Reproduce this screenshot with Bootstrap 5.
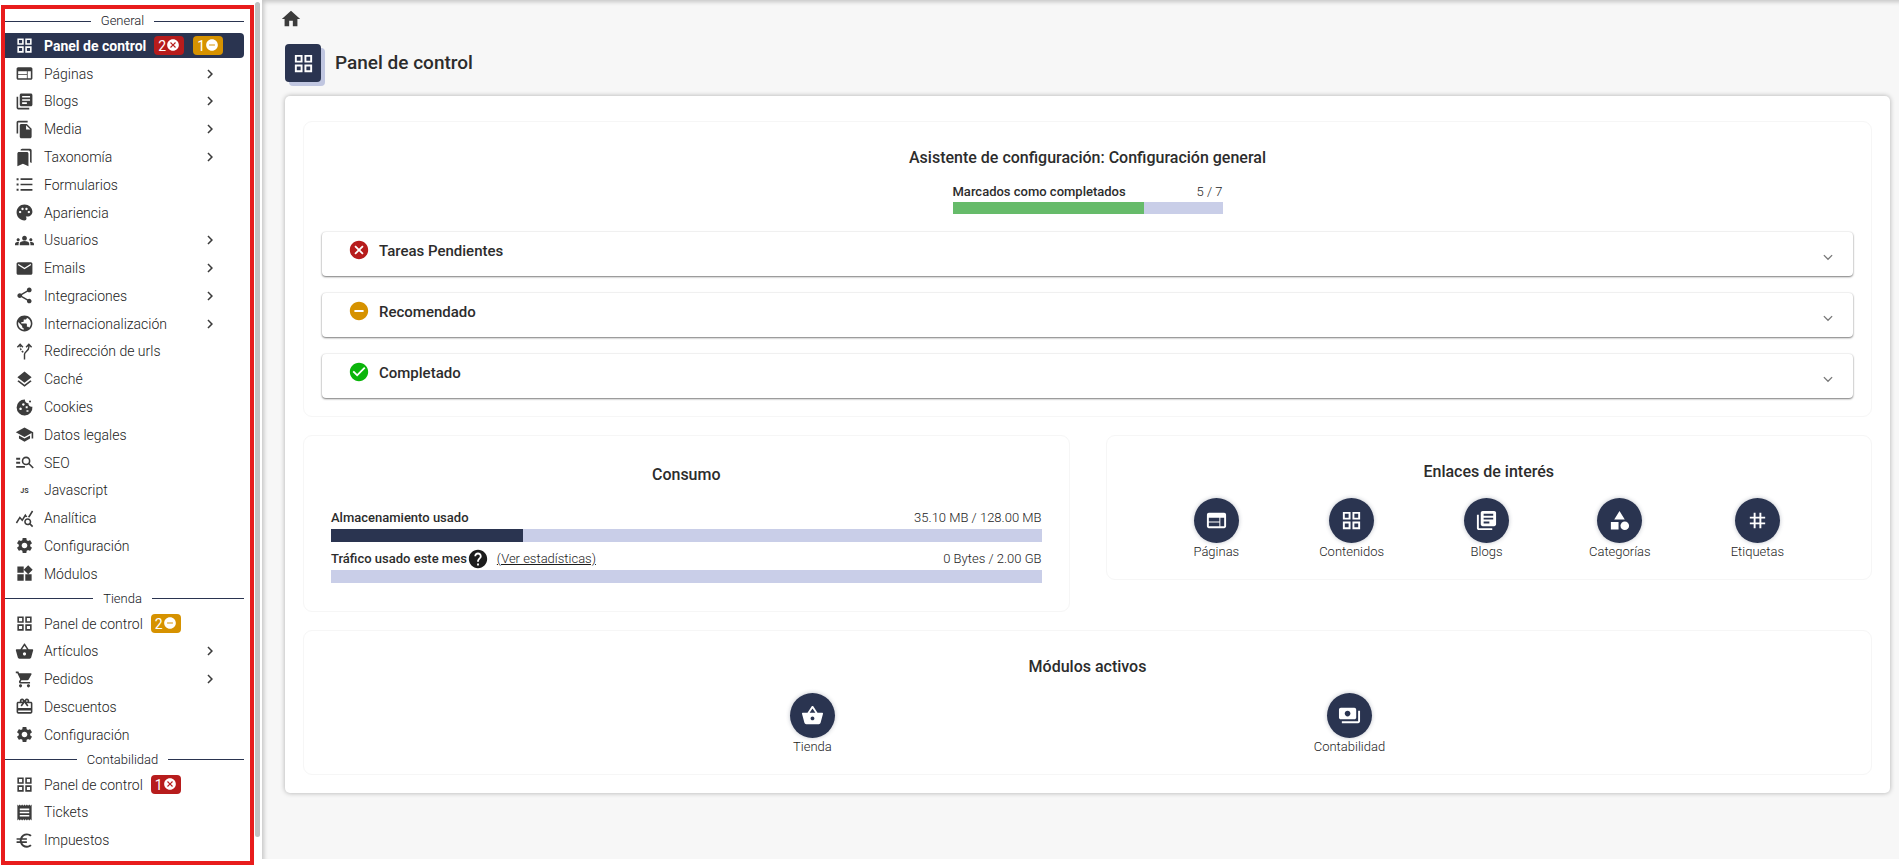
<!DOCTYPE html>
<html lang="es">
<head>
<meta charset="utf-8">
<meta name="viewport" content="width=device-width, initial-scale=1">
<title>Panel de control</title>
<link href="https://cdn.jsdelivr.net/npm/bootstrap@5.3.0/dist/css/bootstrap.min.css" rel="stylesheet">
<style>
  :root { --navy: #2a3450; --lilac: #c9cee8; --ink: #2c2c2c; --icon: #3c3c3c; --danger: #b71c1c; --amber: #d69200; --ok: #0bb50b; }
  body { font-family: Roboto, "Liberation Sans", sans-serif; font-size: 13px; line-height: 16px; font-weight: 300; color: #1c1c1c; background: #fff; }
  .ico { width: 19px; height: 19px; fill: currentColor; flex: none; display: block; }
  .ico-lg { width: 23px; height: 23px; }
  .ico-md { width: 22px; height: 22px; }

  /* Sidebar */
  .side { width: 262px; padding: 5px 0 0 1px; }
  .side-frame { border: 4px solid #e81c1c; width: 253px; padding: 1px 0 7px; }
  .side-track { width: 5px; margin: -3px 0 28px 1px; background: #c1c1c1; border-radius: 3px; }
  .side-title { height: 22px; gap: 10px; padding-right: 6px; color: #14161c; }
  .side-title::before { content: ""; flex: 1 1 0; border-top: 1px solid var(--navy); }
  .side-title::after { content: ""; flex: 1 1 4px; border-top: 1px solid var(--navy); }
  .side-list { flex: 1 1 auto; }
  .side-item { flex: 1 1 27px; }
  .side-link { height: 25px; padding-left: 10px; margin-right: 6px; gap: 10px; font-size: 14px; color: #222; text-decoration: none; border-radius: 0 4px 4px 0; }
  .side-link .ico { color: var(--icon); }
  .side-link.active { background: var(--navy); color: #fff; font-weight: 700; }
  .side-link.active .ico { color: #fff; }
  .side-link .arrow { width: 18px; height: 18px; margin-left: auto; margin-right: 25px; }
  .side-link .pill { height: 19px; padding: 0 4px; border-radius: 4px; color: #fff; font-size: 14px; font-weight: 400; margin-right: -1px; }
  .side-link .pill .ico { width: 14px; height: 14px; color: #fff; margin-top: -2px; }
  .pill-danger { background: var(--danger); }
  .pill-amber { background: var(--amber); }
  .side-label { margin-right: -2px; }

  /* Main area */
  .main { background: #f7f7f7; margin-bottom: 6px; padding: 8px 9px 0 23px; box-shadow: inset 3px 3px 4px -1px rgba(0,0,0,.2); }
  .crumb { margin-left: -5px; color: var(--icon); }
  .tile { width: 36px; height: 38px; border-radius: 4px; background: var(--navy); color: #fff; box-shadow: 4px 4px 0 #c0c6e0; }
  .head { margin: 10px 0 14px; gap: 14px; }
  .head h1 { font-size: 19px; line-height: 24px; font-weight: 500; color: var(--ink); }
  .sheet { background: #fff; border-radius: 5px; padding: 25px 18px 18px; box-shadow: 0 0 5px rgba(0,0,0,.3); }
  .box { border: 1px solid #f6f6f6; border-radius: 9px; }
  .box h2 { font-size: 16px; line-height: 20px; font-weight: 500; text-align: center; margin: 0; color: var(--ink); }
  .box-wizard { padding: 26px 18px 18px; }
  .wizard-bar { width: 270px; }
  .meter { height: 12px; background: var(--lilac); border-radius: 0; margin-top: 2px; }
  .meter .progress-bar { background: var(--navy); }
  .meter .done { background: #66bb6a; }
  .name { font-weight: 500; color: var(--ink); }
  .folds { gap: 17px; margin-top: 18px; }
  .fold { height: 44px; padding: 0 14px 0 26px; font-size: 15px; font-weight: 500; color: var(--ink); background: #fff; border: 0; border-radius: 4px; box-shadow: 0 1px 2px rgba(0,0,0,.5), 0 0 2px rgba(0,0,0,.12); gap: 9px; }
  .fold .ico-md { margin-bottom: 8px; }
  .fold .fold-label { margin-bottom: 6px; }
  .fold .chev { margin: 5px 0 0 auto; color: #777; }
  .box-use { padding: 29px 27px 28px; }
  .box-use .meter { height: 13px; }
  .line-row { height: 18px; }
  .box-links { padding: 26px 7px 19px; }
  .disc { width: 45px; height: 45px; border-radius: 50%; background: var(--navy); color: #fff; box-shadow: 0 0 4px rgba(42,52,80,.3); }
  .quick { color: inherit; text-decoration: none; gap: 1px; }
</style>
</head>
<body>
<svg width="0" height="0" class="position-absolute" aria-hidden="true">
  <symbol id="grid" viewBox="0 0 24 24"><path d="M3 3v8h8V3H3zm6 6H5V5h4v4zm-6 4v8h8v-8H3zm6 6H5v-4h4v4zm4-16v8h8V3h-8zm6 6h-4V5h4v4zm-6 4v8h8v-8h-8zm6 6h-4v-4h4v4z"/></symbol>
  <symbol id="web" viewBox="0 0 24 24"><path d="M20 4H4c-1.1 0-1.99.9-1.99 2L2 18c0 1.1.9 2 2 2h16c1.1 0 2-.9 2-2V6c0-1.1-.9-2-2-2zm-5 14H4v-4h11v4zm0-5H4V9h11v4zm5 5h-4V9h4v9z"/></symbol>
  <symbol id="books" viewBox="0 0 24 24"><path d="M4 6H2v14c0 1.1.9 2 2 2h14v-2H4V6zm16-4H8c-1.1 0-2 .9-2 2v12c0 1.1.9 2 2 2h12c1.1 0 2-.9 2-2V4c0-1.1-.9-2-2-2zm-1 9H9V9h10v2zm-4 4H9v-2h6v2zm4-8H9V5h10v2z"/></symbol>
  <symbol id="copy" viewBox="0 0 24 24"><path d="M16 1H4c-1.1 0-2 .9-2 2v14h2V3h12V1zm-1 4l6 6v10c0 1.1-.9 2-2 2H7.99C6.89 23 6 22.1 6 21l.01-14c0-1.1.89-2 1.99-2h7zm-1 7h5.5L14 6.5V12z"/></symbol>
  <symbol id="marks" viewBox="0 0 24 24"><path d="M19 18l2 1V3c0-1.1-.9-2-2-2H8.99C7.89 1 7 1.9 7 3h10c1.1 0 2 .9 2 2v13zM15 5H5c-1.1 0-2 .9-2 2v16l7-3 7 3V7c0-1.1-.9-2-2-2z"/></symbol>
  <symbol id="list" viewBox="0 0 24 24"><path d="M2 4h2.500v2.500H2zM2 10.750h2.500v2.500H2zM2 17.500h2.500V20H2zM7 4.250h15v2H7zM7 11h15v2H7zM7 17.750h15v2H7z"/></symbol>
  <symbol id="palette" viewBox="0 0 24 24"><path d="M12 2C6.49 2 2 6.49 2 12s4.490 10 10 10c1.380 0 2.500-1.120 2.500-2.500 0-.61-.23-1.200-.64-1.670-.08-.1-.13-.21-.13-.33 0-.28.22-.5.5-.5H16c3.310 0 6-2.690 6-6 0-4.960-4.490-9-10-9zm5.500 11c-.83 0-1.500-.67-1.500-1.500s.67-1.500 1.500-1.500 1.500.67 1.500 1.500-.67 1.500-1.500 1.500zm-3-4c-.83 0-1.500-.67-1.500-1.500S13.670 6 14.500 6s1.500.67 1.500 1.500S15.330 9 14.500 9zM5 11.500c0-.83.67-1.500 1.500-1.500s1.500.67 1.500 1.500S7.330 13 6.500 13 5 12.330 5 11.500zm6-4c0 .83-.67 1.500-1.500 1.500S8 8.330 8 7.500 8.670 6 9.500 6s1.500.67 1.500 1.500z"/></symbol>
  <symbol id="groups" viewBox="0 0 24 24"><path d="M12 12.750c1.630 0 3.070.39 4.240.9 1.080.48 1.760 1.560 1.760 2.730V18H6v-1.610c0-1.180.68-2.260 1.760-2.730 1.170-.52 2.610-.91 4.240-.91zM4 13c1.100 0 2-.9 2-2s-.9-2-2-2-2 .9-2 2 .9 2 2 2zm1.130 1.100c-.37-.06-.74-.1-1.130-.1-.99 0-1.930.21-2.780.58C.48 14.900 0 15.620 0 16.430V18h4.500v-1.610c0-.83.23-1.610.63-2.290zM20 13c1.100 0 2-.9 2-2s-.9-2-2-2-2 .9-2 2 .9 2 2 2zm4 3.430c0-.81-.48-1.530-1.220-1.850-.85-.37-1.790-.58-2.780-.58-.39 0-.76.04-1.130.1.4.68.63 1.460.63 2.290V18H24v-1.570zM12 6c1.660 0 3 1.340 3 3s-1.340 3-3 3-3-1.340-3-3 1.340-3 3-3z"/></symbol>
  <symbol id="mail" viewBox="0 0 24 24"><path d="M20 4H4c-1.100 0-2 .9-2 2v12c0 1.100.9 2 2 2h16c1.100 0 2-.9 2-2V6c0-1.100-.9-2-2-2zm0 4l-8 5-8-5V6l8 5 8-5v2z"/></symbol>
  <symbol id="share" viewBox="0 0 24 24"><path d="M18 16.080c-.76 0-1.440.3-1.960.77L8.910 12.700c.05-.23.09-.46.09-.7s-.04-.47-.09-.7l7.050-4.110c.54.5 1.250.81 2.040.81 1.660 0 3-1.340 3-3s-1.340-3-3-3-3 1.340-3 3c0 .24.04.47.09.7L8.040 9.810C7.500 9.310 6.790 9 6 9c-1.660 0-3 1.340-3 3s1.340 3 3 3c.79 0 1.500-.31 2.040-.81l7.120 4.160c-.05.21-.08.43-.08.65 0 1.610 1.310 2.920 2.920 2.920s2.920-1.310 2.920-2.920-1.310-2.920-2.920-2.920z"/></symbol>
  <symbol id="globe" viewBox="0 0 24 24"><path d="M12 2C6.480 2 2 6.480 2 12s4.480 10 10 10 10-4.480 10-10S17.520 2 12 2zm-1 17.930c-3.950-.49-7-3.850-7-7.930 0-.62.08-1.210.21-1.790L9 15v1c0 1.100.9 2 2 2v1.930zm6.900-2.540c-.26-.81-1-1.390-1.900-1.390h-1v-3c0-.55-.45-1-1-1H8v-2h2c.55 0 1-.45 1-1V7h2c1.100 0 2-.9 2-2v-.41c2.930 1.190 5 4.060 5 7.410 0 2.080-.8 3.970-2.100 5.390z"/></symbol>
  <symbol id="route" viewBox="0 0 24 24"><g fill="none" stroke="currentColor" stroke-width="1.800"><path d="M12 22v-6.500c0-3 5.500-4.500 5.500-9V3.500M14 6.500L17.500 3 21 6.500M3 6.500L6.500 3 10 6.500"/><path d="M6.500 4c0 5 1 6.500 4 9" stroke-dasharray="2.500 1.500"/></g></symbol>
  <symbol id="layers" viewBox="0 0 24 24"><path d="M11.990 18.540l-7.370-5.730L3 14.070l9 7 9-7-1.630-1.270-7.380 5.740zM12 16l7.360-5.730L21 9l-9-7-9 7 1.630 1.270L12 16z"/></symbol>
  <symbol id="cookie" viewBox="0 0 24 24"><path fill-rule="evenodd" d="M12.500 2a4 4 0 0 0 4.500 4.500 4 4 0 0 0 5 4.500A10 10 0 1 1 12.500 2zM10.500 6.500a1.600 1.600 0 1 0 .1 0zM7 12a1.600 1.600 0 1 0 .1 0zM13.500 10.500h2.500v2.500h-2.500zM14.500 15.500h2.500v2h-2.500z"/><circle cx="19" cy="4.500" r="1.300"/></symbol>
  <symbol id="school" viewBox="0 0 24 24"><path d="M5 13.180v4L12 21l7-3.820v-4L12 17l-7-3.820zM12 3L1 9l11 6 9-4.910V17h2V9L12 3z"/></symbol>
  <symbol id="seo" viewBox="0 0 24 24"><path d="M1.500 6h5v2.500h-5zM1.500 11h5v2.500h-5zM1.500 16.500h11v2h-11z"/><g fill="none" stroke="currentColor" stroke-width="2"><circle cx="14" cy="10" r="4.500"/><path d="M17.300 13.300L23 19"/></g></symbol>
  <symbol id="stats" viewBox="0 0 24 24"><path d="M19.880 18.470c.44-.7.7-1.510.7-2.390 0-2.490-2.010-4.500-4.500-4.500s-4.500 2.010-4.500 4.500 2.010 4.500 4.490 4.500c.88 0 1.700-.26 2.390-.7L21.580 23 23 21.580l-3.120-3.110zm-3.800.11c-1.380 0-2.500-1.120-2.500-2.500s1.120-2.500 2.500-2.500 2.500 1.120 2.500 2.500-1.120 2.500-2.500 2.500zm-.36-8.500c-.74.02-1.450.18-2.100.45l-.55-.83-3.800 6.180-3.010-3.520-3.630 5.810L1 17l5-8 3 3.500L13 6l2.720 4.080zm2.590.5c-.64-.28-1.330-.45-2.050-.49L21.380 2 23 3.180l-4.690 7.400z"/></symbol>
  <symbol id="gear" viewBox="0 0 24 24"><path d="M19.140 12.940c.04-.3.06-.61.06-.94 0-.32-.02-.64-.07-.94l2.030-1.580c.18-.14.23-.41.12-.61l-1.920-3.320c-.12-.22-.37-.29-.59-.22l-2.390.96c-.5-.38-1.030-.7-1.620-.94l-.36-2.540c-.04-.24-.24-.41-.48-.41h-3.840c-.24 0-.43.17-.47.41l-.36 2.540c-.59.24-1.130.57-1.620.94l-2.390-.96c-.22-.08-.47 0-.59.22L2.740 8.870c-.12.21-.08.47.12.61l2.030 1.580c-.05.3-.09.63-.09.94s.02.64.07.94l-2.030 1.580c-.18.14-.23.41-.12.61l1.920 3.320c.12.22.37.29.59.22l2.390-.96c.5.38 1.030.7 1.620.94l.36 2.540c.05.24.24.41.48.41h3.840c.24 0 .44-.17.47-.41l.36-2.540c.59-.24 1.130-.56 1.620-.94l2.390.96c.22.08.47 0 .59-.22l1.920-3.320c.12-.22.07-.47-.12-.61l-2.010-1.580zM12 15.600c-1.980 0-3.600-1.620-3.600-3.600s1.620-3.600 3.600-3.600 3.600 1.620 3.600 3.600-1.620 3.600-3.600 3.600z"/></symbol>
  <symbol id="widgets" viewBox="0 0 24 24"><path d="M13 13v8h8v-8h-8zM3 21h8v-8H3v8zM3 3v8h8V3H3zm13.660-1.310L11 7.340 16.660 13l5.660-5.660-5.660-5.650z"/></symbol>
  <symbol id="basket" viewBox="0 0 24 24"><path d="M17.210 9l-4.380-6.560c-.19-.28-.51-.42-.83-.42-.32 0-.64.14-.83.43L6.790 9H2c-.55 0-1 .45-1 1 0 .09.01.18.04.27l2.540 9.270c.23.84 1 1.460 1.920 1.460h13c.92 0 1.690-.62 1.930-1.460l2.540-9.270L23 10c0-.55-.45-1-1-1h-4.790zM9 9l3-4.400L15 9H9zm3 8c-1.100 0-2-.9-2-2s.9-2 2-2 2 .9 2 2-.9 2-2 2z"/></symbol>
  <symbol id="cart" viewBox="0 0 24 24"><path d="M7 18c-1.100 0-1.990.9-1.990 2S5.900 22 7 22s2-.9 2-2-.9-2-2-2zM1 2v2h2l3.600 7.590-1.350 2.450c-.16.28-.25.61-.25.96 0 1.100.9 2 2 2h12v-2H7.420c-.14 0-.25-.11-.25-.25l.03-.12.9-1.630h7.450c.75 0 1.410-.41 1.750-1.030l3.580-6.490c.08-.14.12-.31.12-.48 0-.55-.45-1-1-1H5.210l-.94-2H1zm16 16c-1.100 0-1.990.9-1.990 2s.89 2 1.990 2 2-.9 2-2-.9-2-2-2z"/></symbol>
  <symbol id="gift" viewBox="0 0 24 24"><path d="M20 6h-2.180c.11-.31.18-.65.18-1 0-1.660-1.340-3-3-3-1.050 0-1.960.54-2.500 1.350l-.5.67-.5-.68C10.960 2.540 10.050 2 9 2 7.340 2 6 3.340 6 5c0 .35.07.69.18 1H4c-1.110 0-1.990.89-1.990 2L2 19c0 1.110.89 2 2 2h16c1.110 0 2-.89 2-2V8c0-1.110-.89-2-2-2zm-5-2c.55 0 1 .45 1 1s-.45 1-1 1-1-.45-1-1 .45-1 1-1zM9 4c.55 0 1 .45 1 1s-.45 1-1 1-1-.45-1-1 .45-1 1-1zm11 15H4v-2h16v2zm0-5H4V8h5.080L7 10.830 8.620 12 11 8.760l1-1.360 1 1.360L15.380 12 17 10.830 14.920 8H20v6z"/></symbol>
  <symbol id="receipt" viewBox="0 0 24 24"><path d="M18 17H6v-2h12v2zm0-4H6v-2h12v2zm0-4H6V7h12v2zM3 22l1.500-1.500L6 22l1.500-1.500L9 22l1.500-1.500L12 22l1.500-1.500L15 22l1.500-1.500L18 22l1.500-1.500L21 22V2l-1.500 1.500L18 2l-1.500 1.500L15 2l-1.500 1.500L12 2l-1.500 1.500L9 2 7.500 3.500 6 2 4.500 3.500 3 2v20z"/></symbol>
  <symbol id="euro" viewBox="0 0 24 24"><path d="M15 18.500c-2.510 0-4.680-1.420-5.760-3.500H15v-2H8.580c-.05-.33-.08-.66-.08-1s.03-.67.08-1H15V9H9.240C10.320 6.920 12.500 5.500 15 5.500c1.610 0 3.090.59 4.230 1.570L21 5.300C19.410 3.870 17.300 3 15 3c-3.920 0-7.240 2.510-8.480 6H2v2h4.060c-.04.33-.06.66-.06 1s.02.67.06 1H2v2h4.520c1.240 3.490 4.560 6 8.480 6 2.310 0 4.410-.87 6-2.300l-1.780-1.770c-1.130.98-2.600 1.570-4.220 1.570z"/></symbol>
  <symbol id="cancel" viewBox="0 0 24 24"><path d="M12 2C6.470 2 2 6.470 2 12s4.470 10 10 10 10-4.470 10-10S17.530 2 12 2zm5 13.590L15.590 17 12 13.410 8.410 17 7 15.590 10.590 12 7 8.410 8.410 7 12 10.590 15.590 7 17 8.410 13.410 12 17 15.590z"/></symbol>
  <symbol id="minus" viewBox="0 0 24 24"><path d="M12 2C6.480 2 2 6.480 2 12s4.480 10 10 10 10-4.480 10-10S17.520 2 12 2zm5 11H7v-2h10v2z"/></symbol>
  <symbol id="check" viewBox="0 0 24 24"><path d="M12 2C6.480 2 2 6.480 2 12s4.480 10 10 10 10-4.480 10-10S17.520 2 12 2zm-2 15l-5-5 1.410-1.410L10 14.170l7.590-7.590L19 8l-9 9z"/></symbol>
  <symbol id="help" viewBox="0 0 24 24"><path d="M12 2C6.480 2 2 6.480 2 12s4.480 10 10 10 10-4.480 10-10S17.520 2 12 2zm1 17h-2v-2h2v2zm2.070-7.750l-.9.92C13.450 12.900 13 13.500 13 15h-2v-.5c0-1.100.45-2.100 1.170-2.830l1.240-1.260c.37-.36.59-.86.59-1.410 0-1.100-.9-2-2-2s-2 .9-2 2H8c0-2.210 1.790-4 4-4s4 1.790 4 4c0 .88-.36 1.680-.93 2.250z"/></symbol>
  <symbol id="home" viewBox="0 0 24 24"><path d="M10 20v-6h4v6h5v-8h3L12 3 2 12h3v8z"/></symbol>
  <symbol id="shapes" viewBox="0 0 24 24"><path d="M12 2l-5.500 9h11zM3 13.500h8v8H3z"/><circle cx="17.500" cy="17.500" r="4.500"/></symbol>
  <symbol id="hash" viewBox="0 0 24 24"><path d="M20 10V8h-4V4h-2v4h-4V4H8v4H4v2h4v4H4v2h4v4h2v-4h4v4h2v-4h4v-2h-4v-4h4zm-6 4h-4v-4h4v4z"/></symbol>
  <symbol id="money" viewBox="0 0 24 24"><path d="M19 14V6c0-1.100-.9-2-2-2H3c-1.100 0-2 .9-2 2v8c0 1.100.9 2 2 2h14c1.100 0 2-.9 2-2zm-9-1c-1.660 0-3-1.340-3-3s1.340-3 3-3 3 1.340 3 3-1.340 3-3 3zm13-6v11c0 1.100-.9 2-2 2H4v-2h17V7h2z"/></symbol>
  <symbol id="right" viewBox="0 0 24 24"><path d="M10 6L8.590 7.410 13.170 12l-4.580 4.590L10 18l6-6z"/></symbol>
  <symbol id="down" viewBox="0 0 24 24"><path d="M7.500 10l4.500 4.500 4.500-4.500" fill="none" stroke="currentColor" stroke-width="1.400"/></symbol>
</svg>

<div class="d-flex min-vh-100">
  <aside class="side d-flex flex-shrink-0">
    <nav class="side-frame d-flex flex-column" aria-label="Menú principal">
      <div class="side-title d-flex align-items-center flex-shrink-0">General</div>
      <ul class="side-list list-unstyled m-0 d-flex flex-column" style="flex-grow: 20">
        <li class="side-item d-flex flex-column justify-content-center"><a href="#" class="side-link active d-flex align-items-center"><svg class="ico"><use href="#grid"/></svg><span class="side-label">Panel de control</span><span class="pill pill-danger d-flex align-items-center">2<svg class="ico"><use href="#cancel"/></svg></span><span class="pill pill-amber d-flex align-items-center">1<svg class="ico"><use href="#minus"/></svg></span></a></li>
        <li class="side-item d-flex flex-column justify-content-center"><a href="#" class="side-link d-flex align-items-center"><svg class="ico"><use href="#web"/></svg>Páginas<svg class="ico arrow"><use href="#right"/></svg></a></li>
        <li class="side-item d-flex flex-column justify-content-center"><a href="#" class="side-link d-flex align-items-center"><svg class="ico"><use href="#books"/></svg>Blogs<svg class="ico arrow"><use href="#right"/></svg></a></li>
        <li class="side-item d-flex flex-column justify-content-center"><a href="#" class="side-link d-flex align-items-center"><svg class="ico"><use href="#copy"/></svg>Media<svg class="ico arrow"><use href="#right"/></svg></a></li>
        <li class="side-item d-flex flex-column justify-content-center"><a href="#" class="side-link d-flex align-items-center"><svg class="ico"><use href="#marks"/></svg>Taxonomía<svg class="ico arrow"><use href="#right"/></svg></a></li>
        <li class="side-item d-flex flex-column justify-content-center"><a href="#" class="side-link d-flex align-items-center"><svg class="ico"><use href="#list"/></svg>Formularios</a></li>
        <li class="side-item d-flex flex-column justify-content-center"><a href="#" class="side-link d-flex align-items-center"><svg class="ico"><use href="#palette"/></svg>Apariencia</a></li>
        <li class="side-item d-flex flex-column justify-content-center"><a href="#" class="side-link d-flex align-items-center"><svg class="ico"><use href="#groups"/></svg>Usuarios<svg class="ico arrow"><use href="#right"/></svg></a></li>
        <li class="side-item d-flex flex-column justify-content-center"><a href="#" class="side-link d-flex align-items-center"><svg class="ico"><use href="#mail"/></svg>Emails<svg class="ico arrow"><use href="#right"/></svg></a></li>
        <li class="side-item d-flex flex-column justify-content-center"><a href="#" class="side-link d-flex align-items-center"><svg class="ico"><use href="#share"/></svg>Integraciones<svg class="ico arrow"><use href="#right"/></svg></a></li>
        <li class="side-item d-flex flex-column justify-content-center"><a href="#" class="side-link d-flex align-items-center"><svg class="ico"><use href="#globe"/></svg>Internacionalización<svg class="ico arrow"><use href="#right"/></svg></a></li>
        <li class="side-item d-flex flex-column justify-content-center"><a href="#" class="side-link d-flex align-items-center"><svg class="ico"><use href="#route"/></svg>Redirección de urls</a></li>
        <li class="side-item d-flex flex-column justify-content-center"><a href="#" class="side-link d-flex align-items-center"><svg class="ico"><use href="#layers"/></svg>Caché</a></li>
        <li class="side-item d-flex flex-column justify-content-center"><a href="#" class="side-link d-flex align-items-center"><svg class="ico"><use href="#cookie"/></svg>Cookies</a></li>
        <li class="side-item d-flex flex-column justify-content-center"><a href="#" class="side-link d-flex align-items-center"><svg class="ico"><use href="#school"/></svg>Datos legales</a></li>
        <li class="side-item d-flex flex-column justify-content-center"><a href="#" class="side-link d-flex align-items-center"><svg class="ico"><use href="#seo"/></svg>SEO</a></li>
        <li class="side-item d-flex flex-column justify-content-center"><a href="#" class="side-link d-flex align-items-center"><svg class="ico" viewBox="0 0 24 24" aria-hidden="true"><text x="12" y="15" text-anchor="middle" font-size="9" font-weight="700">JS</text></svg>Javascript</a></li>
        <li class="side-item d-flex flex-column justify-content-center"><a href="#" class="side-link d-flex align-items-center"><svg class="ico"><use href="#stats"/></svg>Analítica</a></li>
        <li class="side-item d-flex flex-column justify-content-center"><a href="#" class="side-link d-flex align-items-center"><svg class="ico"><use href="#gear"/></svg>Configuración</a></li>
        <li class="side-item d-flex flex-column justify-content-center"><a href="#" class="side-link d-flex align-items-center"><svg class="ico"><use href="#widgets"/></svg>Módulos</a></li>
      </ul>
      <div class="side-title d-flex align-items-center flex-shrink-0">Tienda</div>
      <ul class="side-list list-unstyled m-0 d-flex flex-column" style="flex-grow: 5">
        <li class="side-item d-flex flex-column justify-content-center"><a href="#" class="side-link d-flex align-items-center"><svg class="ico"><use href="#grid"/></svg><span class="side-label">Panel de control</span><span class="pill pill-amber d-flex align-items-center">2<svg class="ico"><use href="#minus"/></svg></span></a></li>
        <li class="side-item d-flex flex-column justify-content-center"><a href="#" class="side-link d-flex align-items-center"><svg class="ico"><use href="#basket"/></svg>Artículos<svg class="ico arrow"><use href="#right"/></svg></a></li>
        <li class="side-item d-flex flex-column justify-content-center"><a href="#" class="side-link d-flex align-items-center"><svg class="ico"><use href="#cart"/></svg>Pedidos<svg class="ico arrow"><use href="#right"/></svg></a></li>
        <li class="side-item d-flex flex-column justify-content-center"><a href="#" class="side-link d-flex align-items-center"><svg class="ico"><use href="#gift"/></svg>Descuentos</a></li>
        <li class="side-item d-flex flex-column justify-content-center"><a href="#" class="side-link d-flex align-items-center"><svg class="ico"><use href="#gear"/></svg>Configuración</a></li>
      </ul>
      <div class="side-title d-flex align-items-center flex-shrink-0">Contabilidad</div>
      <ul class="side-list list-unstyled m-0 d-flex flex-column" style="flex-grow: 3">
        <li class="side-item d-flex flex-column justify-content-center"><a href="#" class="side-link d-flex align-items-center"><svg class="ico"><use href="#grid"/></svg><span class="side-label">Panel de control</span><span class="pill pill-danger d-flex align-items-center">1<svg class="ico"><use href="#cancel"/></svg></span></a></li>
        <li class="side-item d-flex flex-column justify-content-center"><a href="#" class="side-link d-flex align-items-center"><svg class="ico"><use href="#receipt"/></svg>Tickets</a></li>
        <li class="side-item d-flex flex-column justify-content-center"><a href="#" class="side-link d-flex align-items-center"><svg class="ico"><use href="#euro"/></svg>Impuestos</a></li>
      </ul>
    </nav>
    <div class="side-track"></div>
  </aside>

  <main class="main flex-grow-1">
    <a href="#" class="crumb d-inline-block" aria-label="Inicio"><svg class="ico ico-md"><use href="#home"/></svg></a>
    <header class="head d-flex align-items-center">
      <span class="tile d-flex align-items-center justify-content-center"><svg class="ico ico-lg"><use href="#grid"/></svg></span>
      <h1 class="m-0">Panel de control</h1>
    </header>

    <div class="sheet">
      <section class="box box-wizard">
        <h2>Asistente de configuración: Configuración general</h2>
        <div class="wizard-bar mx-auto mt-3">
          <div class="d-flex justify-content-between"><span class="name">Marcados como completados</span><span>5 / 7</span></div>
          <div class="progress meter" role="progressbar" aria-label="Marcados como completados" aria-valuenow="5" aria-valuemin="0" aria-valuemax="7"><div class="progress-bar done" style="width: 71%"></div></div>
        </div>
        <div class="folds d-grid">
          <button type="button" class="fold d-flex align-items-center w-100"><svg class="ico ico-md" style="color: var(--danger)"><use href="#cancel"/></svg><span class="fold-label">Tareas Pendientes</span><svg class="ico ico-md chev"><use href="#down"/></svg></button>
          <button type="button" class="fold d-flex align-items-center w-100"><svg class="ico ico-md" style="color: var(--amber)"><use href="#minus"/></svg><span class="fold-label">Recomendado</span><svg class="ico ico-md chev"><use href="#down"/></svg></button>
          <button type="button" class="fold d-flex align-items-center w-100"><svg class="ico ico-md" style="color: var(--ok)"><use href="#check"/></svg><span class="fold-label">Completado</span><svg class="ico ico-md chev"><use href="#down"/></svg></button>
        </div>
      </section>

      <div class="row align-items-start" style="--bs-gutter-x: 36px; margin-top: 18px; margin-bottom: 18px">
        <div class="col-6">
          <section class="box box-use">
            <h2>Consumo</h2>
            <div class="line-row d-flex justify-content-between align-items-center mt-4"><span class="name">Almacenamiento usado</span><span>35.10 MB / 128.00 MB</span></div>
            <div class="progress meter" role="progressbar" aria-label="Almacenamiento usado" aria-valuenow="27" aria-valuemin="0" aria-valuemax="100"><div class="progress-bar" style="width: 27%"></div></div>
            <div class="line-row d-flex align-items-center mt-2"><span class="name">Tráfico usado este mes</span><svg class="ico ico-md"><use href="#help"/></svg><a href="#" class="text-reset ms-2">(Ver estadísticas)</a><span class="ms-auto">0 Bytes / 2.00 GB</span></div>
            <div class="progress meter" role="progressbar" aria-label="Tráfico usado este mes" aria-valuenow="0" aria-valuemin="0" aria-valuemax="100"></div>
          </section>
        </div>
        <div class="col-6">
          <section class="box box-links">
            <h2>Enlaces de interés</h2>
            <div class="d-flex justify-content-evenly mt-3">
              <a href="#" class="quick d-flex flex-column align-items-center"><span class="disc d-flex align-items-center justify-content-center"><svg class="ico ico-lg"><use href="#web"/></svg></span>Páginas</a>
              <a href="#" class="quick d-flex flex-column align-items-center"><span class="disc d-flex align-items-center justify-content-center"><svg class="ico ico-lg"><use href="#grid"/></svg></span>Contenidos</a>
              <a href="#" class="quick d-flex flex-column align-items-center"><span class="disc d-flex align-items-center justify-content-center"><svg class="ico ico-lg"><use href="#books"/></svg></span>Blogs</a>
              <a href="#" class="quick d-flex flex-column align-items-center"><span class="disc d-flex align-items-center justify-content-center"><svg class="ico ico-lg"><use href="#shapes"/></svg></span>Categorías</a>
              <a href="#" class="quick d-flex flex-column align-items-center"><span class="disc d-flex align-items-center justify-content-center"><svg class="ico ico-lg"><use href="#hash"/></svg></span>Etiquetas</a>
            </div>
          </section>
        </div>
      </div>

      <section class="box box-links">
        <h2>Módulos activos</h2>
        <div class="d-flex justify-content-evenly mt-3">
          <a href="#" class="quick d-flex flex-column align-items-center"><span class="disc d-flex align-items-center justify-content-center"><svg class="ico ico-lg"><use href="#basket"/></svg></span>Tienda</a>
          <a href="#" class="quick d-flex flex-column align-items-center"><span class="disc d-flex align-items-center justify-content-center"><svg class="ico ico-lg"><use href="#money"/></svg></span>Contabilidad</a>
        </div>
      </section>
    </div>
  </main>
</div>
<script src="https://cdn.jsdelivr.net/npm/bootstrap@5.3.0/dist/js/bootstrap.bundle.min.js"></script>
</body>
</html>
